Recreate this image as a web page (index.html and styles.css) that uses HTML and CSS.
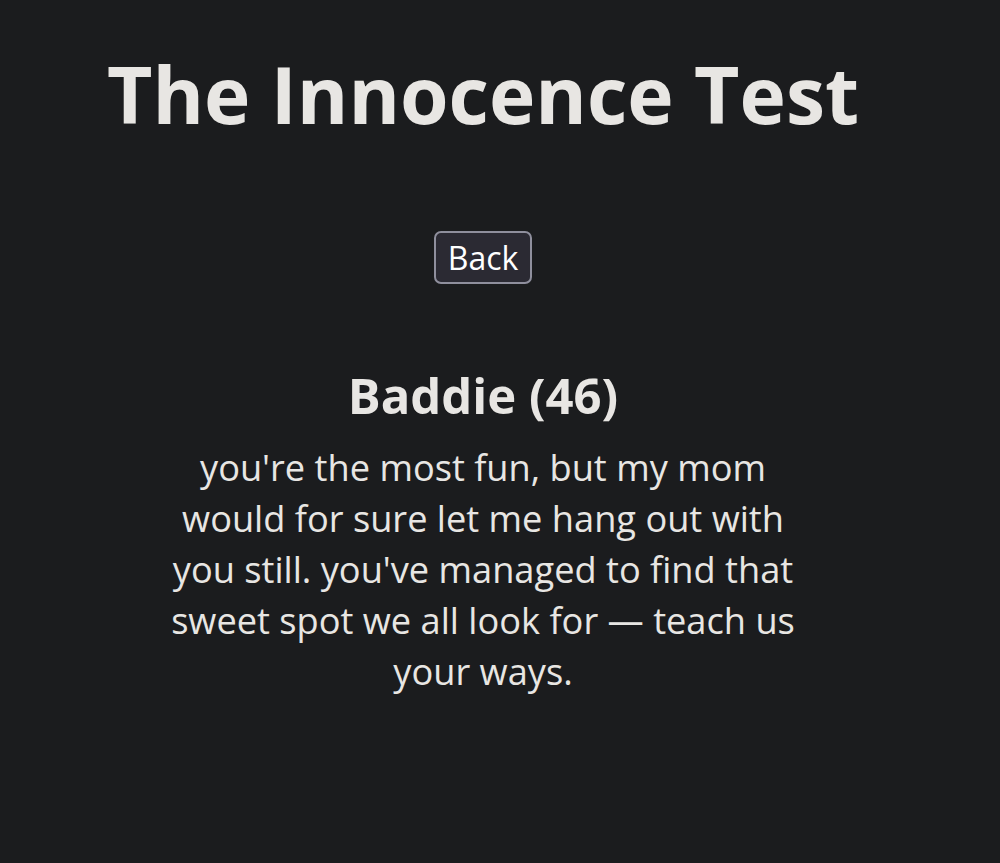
FILE: index.html
```html
<!DOCTYPE html>
<html>
<head>
<meta charset="utf-8">
<link rel="stylesheet" href="styles.css">
</head>
<body>
<main class="page">
  <h1 class="title">The Innocence Test</h1>
  <div class="actions"><button class="back">Back</button></div>
  <section class="result">
    <h2 class="result-title">Baddie (46)</h2>
    <p class="result-text">you're the most fun, but my mom would for sure let me hang out with you still. you've managed to find that sweet spot we all look for — teach us your ways.</p>
  </section>
</main>
</body>
</html>
```
FILE: styles.css
```css
html, body {
  margin: 0;
  padding: 0;
  background: #1b1c1e;
  color: #e8e6e3;
  font-family: "Open Sans", "Noto Sans", sans-serif;
}
.page {
  width: 966px;
  display: flex;
  flex-direction: column;
  align-items: center;
  text-align: center;
}
.title {
  margin: 40px 0 0;
  font-size: 78.5px;
  line-height: 108px;
  font-weight: 700;
}
.actions {
  margin-top: 83px;
}
.back {
  font-family: inherit;
  font-size: 32px;
  line-height: 43px;
  color: #ffffff;
  background: #2b2a33;
  border: 2px solid #8f8f9d;
  border-radius: 7px;
  padding: 3px 12px;
}
.result {
  margin-top: 81px;
  width: 660px;
  display: flex;
  flex-direction: column;
  align-items: center;
}
.result-title {
  margin: 0;
  font-size: 49px;
  line-height: 60px;
  font-weight: 700;
}
.result-text {
  margin: 17px 0 0;
  width: 638px;
  font-size: 36.2px;
  line-height: 51px;
}
```
